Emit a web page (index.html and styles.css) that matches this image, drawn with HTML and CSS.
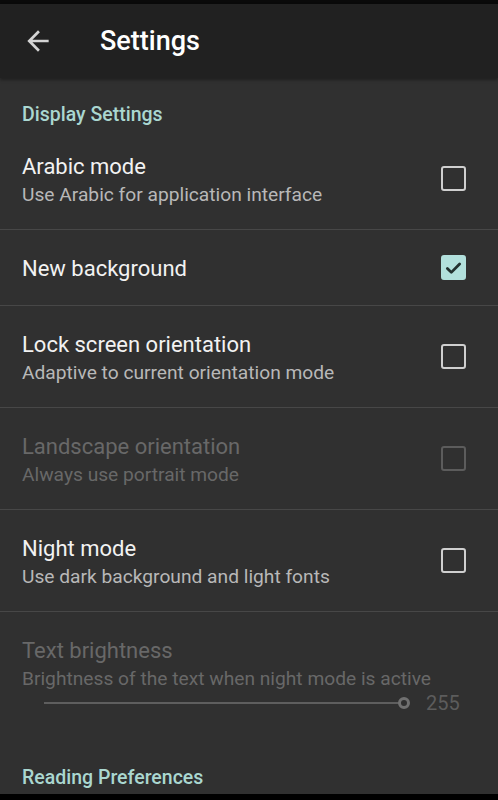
FILE: index.html
```html
<!DOCTYPE html>
<html>
<head>
<meta charset="utf-8">
<link rel="stylesheet" href="styles.css">
</head>
<body>
<div class="screen">
  <div class="status"></div>
  <header class="toolbar">
    <svg class="back" viewBox="0 0 24 24" width="32" height="32"><path fill="#d4d4d4" d="M20 11H7.83l5.59-5.59L12 4l-8 8 8 8 1.41-1.41L7.83 13H20v-2z"/></svg>
    <h1 class="title">Settings</h1>
  </header>
  <main class="content">
    <div class="section">Display Settings</div>
    <div class="row">
      <div class="text"><div class="name">Arabic mode</div><div class="desc">Use Arabic for application interface</div></div>
      <span class="box"></span>
    </div>
    <div class="row single">
      <div class="text"><div class="name">New background</div></div>
      <span class="box checked"><svg viewBox="0 0 24 24" width="22" height="22"><path d="M5 12.5l4.5 4.5L19 7.5" fill="none" stroke="#22302f" stroke-width="3.2" stroke-linecap="round" stroke-linejoin="round"/></svg></span>
    </div>
    <div class="row">
      <div class="text"><div class="name">Lock screen orientation</div><div class="desc">Adaptive to current orientation mode</div></div>
      <span class="box"></span>
    </div>
    <div class="row disabled">
      <div class="text"><div class="name">Landscape orientation</div><div class="desc">Always use portrait mode</div></div>
      <span class="box"></span>
    </div>
    <div class="row">
      <div class="text"><div class="name">Night mode</div><div class="desc">Use dark background and light fonts</div></div>
      <span class="box"></span>
    </div>
    <div class="row disabled slider-row">
      <div class="text">
        <div class="name">Text brightness</div>
        <div class="desc">Brightness of the text when night mode is active</div>
        <div class="slider">
          <div class="track"><span class="thumb"></span></div>
          <span class="value">255</span>
        </div>
      </div>
    </div>
    <div class="section">Reading Preferences</div>
  </main>
</div>
</body>
</html>
```
FILE: styles.css
```css
html, body {
  margin: 0;
  padding: 0;
  background: #000;
}
.screen {
  width: 498px;
  height: 800px;
  overflow: hidden;
  display: flex;
  flex-direction: column;
  font-family: Roboto, "Noto Sans", sans-serif;
  background: #000;
}
.status {
  height: 4px;
  background: #0a0a0a;
  flex: none;
}
.toolbar {
  height: 74px;
  flex: none;
  background: #212121;
  display: flex;
  align-items: center;
  box-shadow: 0 2px 3px rgba(0,0,0,0.35);
  position: relative;
  z-index: 1;
}
.back {
  margin-left: 22px;
}
.title {
  margin: 0 0 0 46px;
  font-size: 27px;
  font-weight: 500;
  color: #ffffff;
}
.content {
  flex: none;
  height: 716px;
  background: #303030;
}
.section {
  height: 50px;
  box-sizing: border-box;
  padding: 24px 22px 0;
  line-height: 26px;
  font-size: 19.5px;
  font-weight: 500;
  color: #aad7d0;
}
.row {
  display: flex;
  align-items: center;
  padding: 4px 32px 0 22px;
  border-bottom: 1px solid #474747;
  height: 102px;
  box-sizing: border-box;
}
.row.single {
  height: 76px;
  padding-top: 2px;
}
.text {
  flex: 1;
}
.name {
  font-size: 22px;
  line-height: 28px;
  color: #f2f2f2;
}
.desc {
  font-size: 19.2px;
  line-height: 28px;
  color: #b8b8b8;
}
.box {
  width: 25px;
  height: 25px;
  box-sizing: border-box;
  border: 2.5px solid #cfcfcf;
  border-radius: 3px;
  display: flex;
  align-items: center;
  justify-content: center;
  flex: none;
  margin-top: -4px;
}
.single .box {
  margin-top: -2px;
}
.box.checked {
  background: #b2e0dc;
  border-color: #b2e0dc;
}
.disabled .name, .disabled .desc {
  color: #686868;
}
.disabled .box {
  border-color: #5c5c5c;
}
.slider-row {
  height: 129px;
  border-bottom: none;
  align-items: flex-start;
  padding-top: 25px;
}
.slider {
  display: flex;
  align-items: center;
  margin-top: -3px;
  height: 26px;
}
.track {
  margin-left: 22px;
  width: 358px;
  height: 2px;
  background: #5e5e5e;
  position: relative;
}
.thumb {
  position: absolute;
  right: -8px;
  top: -5px;
  width: 12px;
  height: 12px;
  box-sizing: border-box;
  border: 3px solid #707070;
  border-radius: 50%;
  background: #303030;
}
.value {
  margin-left: 24px;
  font-size: 20px;
  color: #5c5c5c;
}
```
